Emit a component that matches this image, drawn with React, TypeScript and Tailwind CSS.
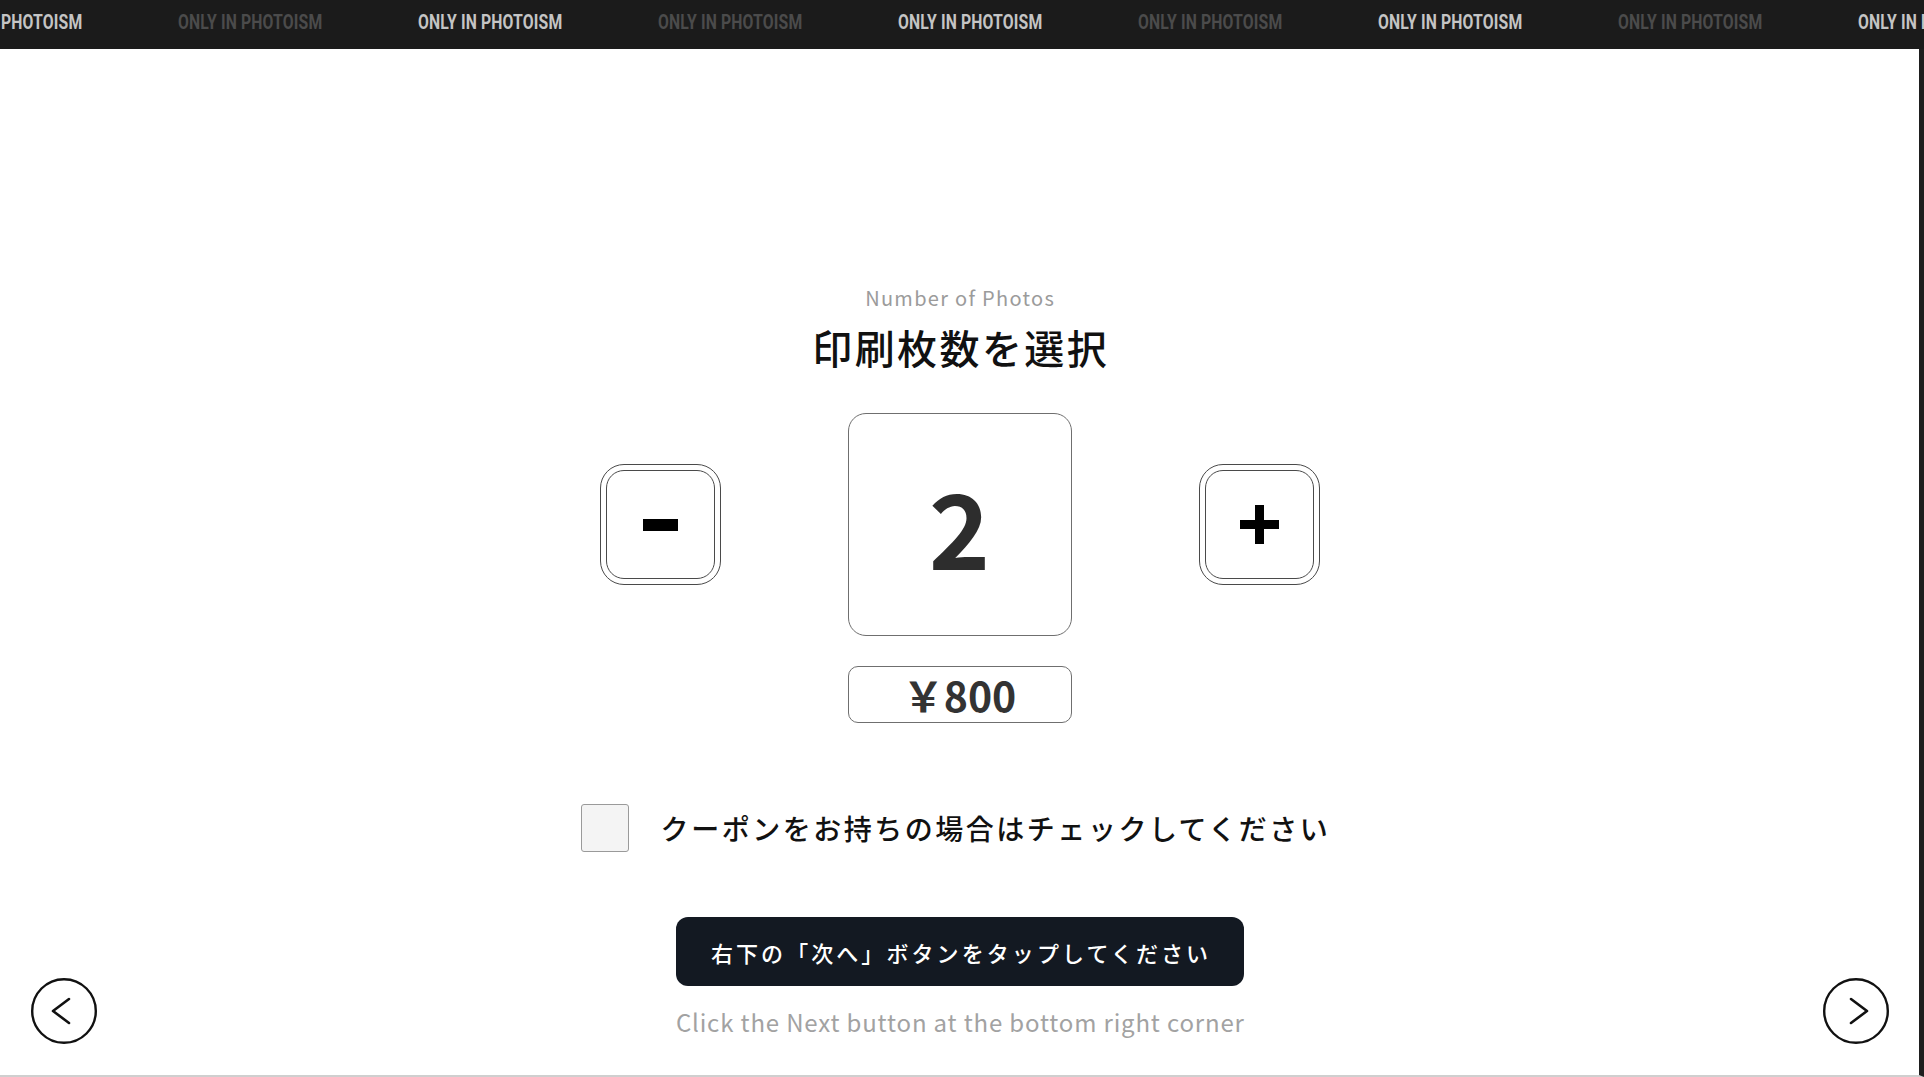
import React from "react";

const FONT = '"Noto Sans CJK JP", "Noto Sans", sans-serif';

function TopBar() {
  const items = Array.from({ length: 9 }, (_, i) => i % 2 === 0);
  return (
    <div className="h-[49px] w-full bg-[#1b1b1b] overflow-hidden flex shrink-0">
      <div className="flex ml-[-62px] pt-[10px]">
        {items.map((bright, i) => (
          <div key={i} className="w-[240px] shrink-0">
            <span
              className={`inline-block origin-left scale-x-[0.75] whitespace-nowrap text-[21px] leading-none font-bold tracking-[0.01em] ${
                bright ? "text-[#c4c4c4]" : "text-[#4b4b4b]"
              }`}
              style={{ fontFamily: "Roboto, 'Liberation Sans', sans-serif" }}
            >
              ONLY IN PHOTOISM
            </span>
          </div>
        ))}
      </div>
    </div>
  );
}

function StepButton({ kind }: { kind: "minus" | "plus" }) {
  return (
    <div className="w-[121px] h-[121px] rounded-[24px] border-[1.5px] border-[#4a4a4a] p-[5px] bg-white">
      <div className="w-full h-full rounded-[18px] border-[1.5px] border-[#4a4a4a] flex items-center justify-center">
        {kind === "minus" ? (
          <svg width="35" height="12" viewBox="0 0 35 12">
            <rect x="0" y="0" width="35" height="12" fill="#000" />
          </svg>
        ) : (
          <svg width="39" height="39" viewBox="0 0 39 39">
            <rect x="0" y="15" width="39" height="9" fill="#000" />
            <rect x="15" y="0" width="9" height="39" fill="#000" />
          </svg>
        )}
      </div>
    </div>
  );
}

function CircleArrow({ dir }: { dir: "left" | "right" }) {
  return (
    <svg width="66" height="66" viewBox="0 0 66 66">
      <circle cx="33" cy="33" r="31.8" fill="white" stroke="#111" strokeWidth="2.4" />
      {dir === "right" ? (
        <polyline points="28,21 44,33 28,45" fill="none" stroke="#111" strokeWidth="2.6" strokeLinecap="round" strokeLinejoin="round" />
      ) : (
        <polyline points="38,21 22,33 38,45" fill="none" stroke="#111" strokeWidth="2.6" strokeLinecap="round" strokeLinejoin="round" />
      )}
    </svg>
  );
}

export default function App() {
  return (
    <div
      className="w-[1924px] h-[1077px] flex flex-col bg-white overflow-hidden"
      style={{ fontFamily: FONT }}
    >
      <TopBar />
      <div className="flex-1 relative border-r-[5px] border-r-[#1e1e1e] border-b-2 border-b-[#cfcfcf] flex flex-col items-center">
        <p className="mt-[239px] text-[20px] leading-none tracking-[0.065em] pl-[0.065em] text-[#9b9b9b]">
          Number of Photos
        </p>
        <h1 className="mt-[19px] text-[40px] leading-none font-medium tracking-[0.06em] pl-[0.06em] text-[#111]">
          印刷枚数を選択
        </h1>

        <div className="mt-[46px] flex items-center gap-[127px]">
          <StepButton kind="minus" />
          <div className="w-[224px] h-[223px] rounded-[18px] border-[1.5px] border-[#6f6f6f] flex items-center justify-center">
            <span className="text-[104px] leading-none font-bold text-[#2d2d2d]">2</span>
          </div>
          <StepButton kind="plus" />
        </div>

        <div className="mt-[30px] w-[224px] h-[57px] rounded-[10px] border-[1.5px] border-[#6f6f6f] flex items-center justify-center">
          <span className="text-[41px] leading-none font-bold text-[#333]">￥800</span>
        </div>

        <div className="mt-[81px] flex items-center gap-[32px] mr-[8px]">
          <div className="w-[48px] h-[48px] rounded-[3px] border border-[#9a9a9a] bg-[#f4f4f4]" />
          <span className="text-[28px] leading-none font-medium tracking-[0.09em] text-[#111]">
            クーポンをお持ちの場合はチェックしてください
          </span>
        </div>

        <div className="mt-[65px] w-[568px] h-[69px] rounded-[12px] bg-[#131922] flex items-center justify-center">
          <span className="text-[22px] leading-none font-medium tracking-[0.14em] pl-[0.14em] text-white">
            右下の「次へ」ボタンをタップしてください
          </span>
        </div>

        <p className="mt-[24px] text-[24px] leading-none tracking-[0.035em] pl-[0.07em] text-[#a2a2a2]">
          Click the Next button at the bottom right corner
        </p>

        <div className="absolute left-[31px] bottom-[31px]">
          <CircleArrow dir="left" />
        </div>
        <div className="absolute right-[30px] bottom-[31px]">
          <CircleArrow dir="right" />
        </div>
      </div>
    </div>
  );
}
